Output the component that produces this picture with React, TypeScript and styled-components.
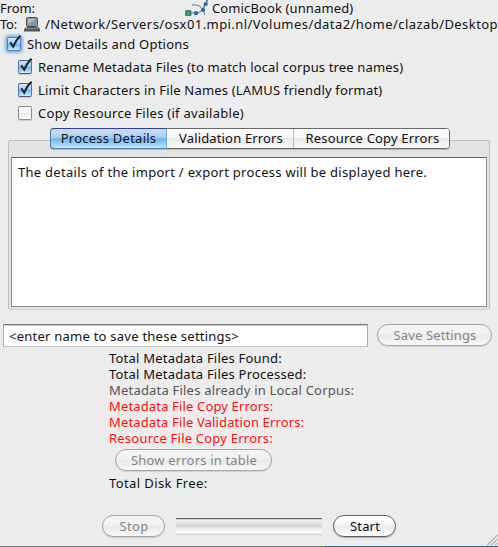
import React from 'react';
import styled, { createGlobalStyle, css } from 'styled-components';

const GlobalStyle = createGlobalStyle`
  * { box-sizing: border-box; }
  body { margin: 0; background: #ececec; overflow: hidden; }
`;

const Window = styled.main`
  position: relative;
  display: flex;
  flex-direction: column;
  width: 498px;
  height: 547px;
  overflow: hidden;
  background: #ececec;
  color: #111;
  font: 13px/16px 'Noto Sans', 'Open Sans', sans-serif;
  white-space: nowrap;
`;

const Text = styled.span<{ $track: number; $tone?: string }>`
  display: block;
  height: 16px;
  letter-spacing: ${(p) => p.$track}px;
  color: ${(p) => p.$tone ?? 'inherit'};
`;

const SourceRow = styled.div`
  display: grid;
  grid-template-columns: 185px 27px auto;
  height: 16px;
`;

const TargetRow = styled.div`
  display: grid;
  grid-template-columns: 24px 21px auto;
  height: 16px;
`;

const CorpusIcon = styled.svg`
  display: block;
  width: 24px;
  height: 16px;
`;

const ComputerIcon = styled.svg`
  display: block;
  width: 17px;
  height: 16px;
`;

const OptionRow = styled.label<{ $main?: boolean }>`
  display: flex;
  align-items: flex-start;
  height: ${(p) => (p.$main ? 24 : 23)}px;
  padding: ${(p) => (p.$main ? '4px 0 0 7px' : '3px 0 0 18px')};
  gap: 6px;
`;

const CheckFrame = styled.span<{ $checked?: boolean; $focus?: boolean }>`
  width: 14px;
  height: 14px;
  margin-top: 1px;
  border: 1px solid #8b8b8b;
  border-radius: 2px;
  background: linear-gradient(#fff 0, #f4f4f4 45%, #e7e7e7 50%, #fff);
  box-shadow: 0 1px 1px rgba(0, 0, 0, 0.15);
  ${(p) =>
    p.$checked &&
    css`
      border-color: #4a5f9c #56749f #557;
      background: linear-gradient(#d3e5f8 0, #a5cdf3 45%, #74b4ec 52%, #c4f0ff);
    `}
  ${(p) =>
    p.$focus &&
    css`
      border-color: #4c7fc0;
      box-shadow: 0 0 3px 2px rgba(91, 157, 218, 0.75);
    `}
`;

const CheckMark = styled.svg`
  display: block;
  width: 16px;
  height: 16px;
  margin: -3px 0 0 -1px;
  overflow: visible;
`;

const TabSection = styled.section`
  display: flex;
  flex-direction: column;
  width: 482px;
  height: 170px;
  margin: 15px 0 0 8px;
  padding: 0 2px 2px;
  border: 1px solid #bdbdbd;
  border-bottom-color: #d0d0d0;
  border-radius: 3px;
  background: #e4e4e4;
`;

const TabBar = styled.div`
  display: flex;
  flex: none;
  width: 400px;
  height: 21px;
  margin: -13px 0 8px 39px;
  border: 1px solid #686868;
  border-radius: 4px;
  box-shadow: 0 1px 1px rgba(0, 0, 0, 0.2);
`;

const Tab = styled.button<{ $width: number; $selected?: boolean }>`
  display: flex;
  flex: none;
  justify-content: center;
  align-items: flex-start;
  width: ${(p) => p.$width}px;
  height: 19px;
  padding: 1px 0 0 2px;
  border: 0;
  border-right: 1px solid #bcbcbc;
  color: inherit;
  font: inherit;
  background: linear-gradient(#fff 0, #f5f5f5 45%, #e9e9e9 50%, #f8f8f8);
  &:last-child {
    border-right: 0;
    border-radius: 0 3px 3px 0;
  }
  ${(p) =>
    p.$selected &&
    css`
      height: 21px;
      margin: -1px 0 -1px -1px;
      padding: 1px 0 0;
      border: 1px solid #5478a6;
      border-top-color: #303c91;
      border-right: 1px solid #75afe0;
      border-radius: 4px 0 0 4px;
      background: linear-gradient(#c9e0f7 0, #a7cff5 45%, #6fb2ec 52%, #baeaff);
    `}
`;

const DetailsPane = styled.div`
  flex: 1;
  padding: 6px 6px;
  border: 1px solid #8a8a8a;
  border-top-color: #666;
  background: #fff;
`;

const SaveRow = styled.div`
  display: flex;
  height: 23px;
  margin: 14px 0 0 3px;
  gap: 9px;
`;

const NameField = styled.div`
  width: 365px;
  height: 23px;
  padding: 3px 5px;
  border: 1px solid #c4c4c4;
  border-left-color: #aaa;
  border-right-color: #aaa;
  border-top: 1px solid #737373;
  background: #fff;
  box-shadow: inset 0 1px 0 #d4d4d4;
`;

const PillButton = styled.button<{ $width: number; $enabled?: boolean }>`
  display: flex;
  flex: none;
  justify-content: center;
  align-items: flex-start;
  width: ${(p) => p.$width}px;
  height: 22px;
  padding: 2px 0 0 1px;
  border: 1px solid ${(p) => (p.$enabled ? '#5e5e5e' : '#a5a5a5')};
  border-radius: 11px;
  color: ${(p) => (p.$enabled ? '#111' : '#858585')};
  font: inherit;
  background: ${(p) =>
    p.$enabled
      ? 'linear-gradient(#fff 0, #f7f7f7 45%, #e9e9e9 50%, #fff)'
      : 'linear-gradient(#f4f4f4 0, #f1f1f1 45%, #e9e9e9 50%, #f7f7f7)'};
  box-shadow: 0 1px 1px rgba(0, 0, 0, ${(p) => (p.$enabled ? 0.25 : 0.12)});
`;

const Summary = styled.div`
  display: flex;
  flex-direction: column;
  align-items: flex-start;
  margin: 3px 0 0 109px;
`;

const ErrorButtonSlot = styled.div`
  margin: 3px 0 4px 6px;
`;

const ActionRow = styled.div`
  display: flex;
  margin: 24px 0 0 102px;
  gap: 11px;
`;

const ProgressTrack = styled.div`
  width: 146px;
  height: 17px;
  margin-top: 3px;
  border-top: 1px solid #666;
  border-bottom: 1px solid #d2d2d2;
  background: linear-gradient(#c4c4c4 0, #f2f2f2 10%, #e3e3e3 30%, #d0d0d0 48%, #eee 62%, #fafafa 90%, #e8e8e8);
`;

const WindowEdge = styled.div`
  display: flex;
  height: 1px;
  margin-top: auto;
  background: linear-gradient(90deg, #777 0 325px, #4d5d7d 325px);
`;

const ResizeGrip = styled.svg`
  position: absolute;
  right: 0;
  bottom: 1px;
  width: 12px;
  height: 12px;
`;

type OptionProps = { label: string; track: number; checked?: boolean; main?: boolean };

function Option({ label, track, checked, main }: OptionProps) {
  return (
    <OptionRow $main={main}>
      <CheckFrame $checked={checked} $focus={main}>
        {checked && (
          <CheckMark viewBox="0 0 16 16">
            <path d="M3.2 7.2 6.2 11.6C8 7.5 10 4 13.6.8" fill="none" stroke="#1c2432" strokeWidth="2" />
          </CheckMark>
        )}
      </CheckFrame>
      <Text $track={track}>{label}</Text>
    </OptionRow>
  );
}

const options: OptionProps[] = [
  { label: 'Show Details and Options', track: 0.228, checked: true, main: true },
  { label: 'Rename Metadata Files (to match local corpus tree names)', track: 0.15, checked: true },
  { label: 'Limit Characters in File Names (LAMUS friendly format)', track: 0.18, checked: true },
  { label: 'Copy Resource Files (if available)', track: 0.273 },
];

const totals = [
  { label: 'Total Metadata Files Found:', track: 0.214, tone: '#111' },
  { label: 'Total Metadata Files Processed:', track: 0.215, tone: '#111' },
  { label: 'Metadata Files already in Local Corpus:', track: 0.2, tone: '#555' },
  { label: 'Metadata File Copy Errors:', track: 0.15, tone: '#ff0c0c' },
  { label: 'Metadata File Validation Errors:', track: 0.14, tone: '#ff0c0c' },
  { label: 'Resource File Copy Errors:', track: 0.22, tone: '#ff0c0c' },
];

export default function App() {
  return (
    <Window>
      <GlobalStyle />
      <SourceRow>
        <Text $track={-0.07}>From:</Text>
        <CorpusIcon viewBox="0 0 24 16">
          <path d="M3 13h8q6 0 9-9M7 5q8-1 11 5l2 5M18 10l3-7" fill="none" stroke="#4a7ba6" strokeWidth="1" />
          <rect x=".8" y="10.8" width="5" height="4.5" fill="#4f9b6d" stroke="#2b6b48" />
          <circle cx="11" cy="13.2" r="2.1" fill="#2f659c" />
          <circle cx="18" cy="10" r="2.1" fill="#2f659c" />
          <circle cx="20.7" cy="4" r="2.1" fill="#2f659c" />
          <circle cx="22" cy="1" r="1" fill="#2f659c" />
        </CorpusIcon>
        <Text $track={0.12}>ComicBook (unnamed)</Text>
      </SourceRow>
      <TargetRow>
        <Text $track={-0.2}>To:</Text>
        <ComputerIcon viewBox="0 0 17 16">
          <rect x="2.5" y="1.5" width="11" height="9" rx="1" fill="#8199a6" stroke="#464f56" />
          <path d="M4 3h8L4 8z" fill="#abc0ca" />
          <path d="M3 11h11l2 2v2.5H0V13z" fill="#4f565e" />
          <path d="M2 12.5h12" stroke="#8d9398" />
        </ComputerIcon>
        <Text $track={0.437}>/Network/Servers/osx01.mpi.nl/Volumes/data2/home/clazab/Desktop</Text>
      </TargetRow>
      {options.map((o) => (
        <Option key={o.label} {...o} />
      ))}
      <TabSection>
        <TabBar>
          <Tab $width={117} $selected>
            <Text $track={0.24}>Process Details</Text>
          </Tab>
          <Tab $width={127}>
            <Text $track={0.158}>Validation Errors</Text>
          </Tab>
          <Tab $width={155}>
            <Text $track={0.17}>Resource Copy Errors</Text>
          </Tab>
        </TabBar>
        <DetailsPane>
          <Text $track={0.28}>The details of the import / export process will be displayed here.</Text>
        </DetailsPane>
      </TabSection>
      <SaveRow>
        <NameField>
          <Text $track={0.242}>&lt;enter name to save these settings&gt;</Text>
        </NameField>
        <PillButton $width={115}>
          <Text $track={0.138}>Save Settings</Text>
        </PillButton>
      </SaveRow>
      <Summary>
        {totals.map((t) => (
          <Text key={t.label} $track={t.track} $tone={t.tone}>
            {t.label}
          </Text>
        ))}
        <ErrorButtonSlot>
          <PillButton $width={157}>
            <Text $track={0.177}>Show errors in table</Text>
          </PillButton>
        </ErrorButtonSlot>
        <Text $track={0.4}>Total Disk Free:</Text>
      </Summary>
      <ActionRow>
        <PillButton $width={63}>
          <Text $track={0.327}>Stop</Text>
        </PillButton>
        <ProgressTrack />
        <PillButton $width={63} $enabled>
          <Text $track={0.163}>Start</Text>
        </PillButton>
      </ActionRow>
      <ResizeGrip viewBox="0 0 12 12">
        <path d="M1 11.5 11.5 1M5 11.5 11.5 5M9 11.5 11.5 9" stroke="#858585" fill="none" />
      </ResizeGrip>
      <WindowEdge />
    </Window>
  );
}
